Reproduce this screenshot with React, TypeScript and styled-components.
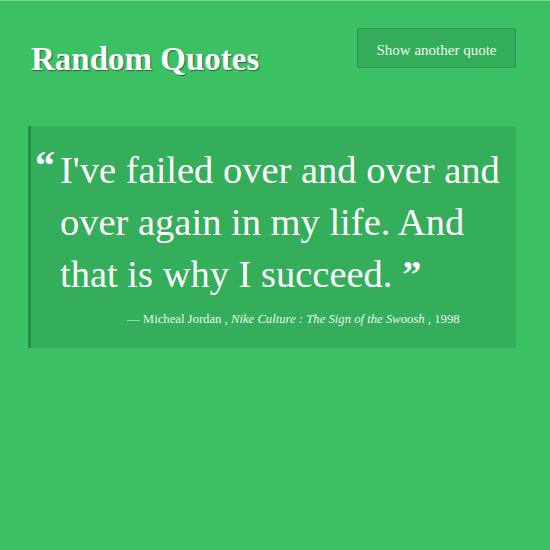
import styled, { createGlobalStyle } from 'styled-components';

const GlobalStyle = createGlobalStyle`
  html, body {
    margin: 0;
    padding: 0;
    background: #3bc163;
  }
  body {
    font-family: 'Liberation Serif', 'Times New Roman', serif;
    color: #fff;
    min-height: 550px;
    border-top: 1px solid #7fd59a;
  }
`;

/** 전체 페이지 */
const Page = styled.div`
  width: 488px;
  margin-left: 28px;
  padding-top: 27px;
`;

/** 제목 + 버튼 */
const TopBar = styled.header`
  display: flex;
  justify-content: space-between;
  align-items: flex-start;
`;

const Title = styled.h1`
  margin: 11px 0 0 3px;
  font-size: 33px;
  line-height: 40px;
  font-weight: bold;
  color: #fff;
  text-shadow: 1px 1px 1px rgba(0, 0, 0, 0.45);
`;

const NextButton = styled.button`
  box-sizing: border-box;
  height: 40px;
  width: 159px;
  padding: 3px 0 0;
  background: #34ad5a;
  border: 1px solid #2c954d;
  border-radius: 2px;
  color: #f2fbf4;
  font-family: inherit;
  font-size: 15px;
  line-height: 34px;
  cursor: pointer;
`;

/** 인용문 박스 */
const QuoteBox = styled.blockquote`
  margin: 47px 0 0;
  padding: 18px 0 19px 4px;
  background: #35ae5b;
  border-left: 3px solid #2a8c48;
  border-radius: 0 2px 2px 0;
`;

const QuoteRow = styled.div`
  display: flex;
  align-items: flex-start;
`;

/** 여는 따옴표 (왼쪽 칸) */
const OpenMark = styled.span`
  flex: 0 0 25px;
  margin-top: -4px;
  font-size: 40px;
  font-weight: bold;
  line-height: 52px;
  color: #fff;
`;

/** 닫는 따옴표 (문장 끝) */
const CloseMark = styled.span`
  font-size: 38px;
  font-weight: bold;
  line-height: 0;
`;

const QuoteText = styled.p`
  width: 452px;
  margin: 0;
  font-size: 38.5px;
  line-height: 52px;
  color: #fff;
`;

const Source = styled.footer`
  margin: 9px 0 0 92px;
  font-size: 12.7px;
  line-height: 20px;
  color: #e6f6ea;

  cite {
    font-style: italic;
  }
`;

const quote = {
  text: "I've failed over and over and over again in my life. And that is why I succeed.",
  author: 'Micheal Jordan',
  source: 'Nike Culture : The Sign of the Swoosh',
  year: 1998,
};

function App() {
  return (
    <>
      <GlobalStyle />
      <Page>
        <TopBar>
          <Title>Random Quotes</Title>
          <NextButton>Show another quote</NextButton>
        </TopBar>
        <QuoteBox>
          <QuoteRow>
            <OpenMark>“</OpenMark>
            <QuoteText>
              {quote.text} <CloseMark>”</CloseMark>
            </QuoteText>
          </QuoteRow>
          <Source>
            — {quote.author} , <cite>{quote.source}</cite> , {quote.year}
          </Source>
        </QuoteBox>
      </Page>
    </>
  );
}

export default App;
